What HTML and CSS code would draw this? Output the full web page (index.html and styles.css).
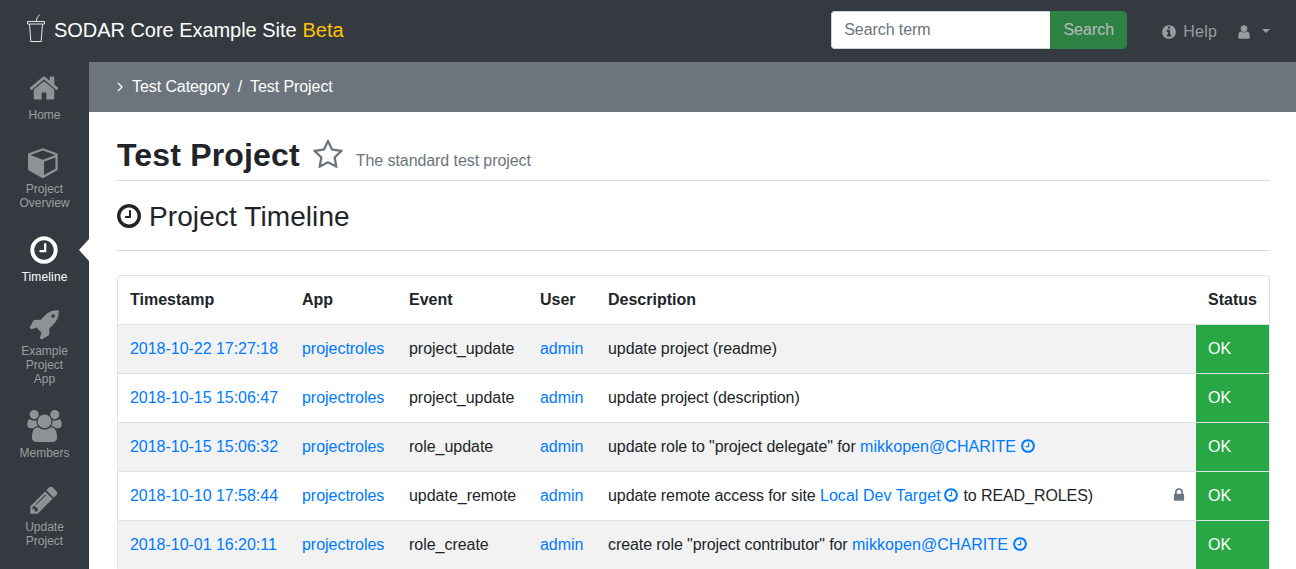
FILE: index.html

```html
<!DOCTYPE html>
<html lang="en">
<head>
  <meta charset="UTF-8" />
  <title>Project Timeline</title>
  <link rel="stylesheet" href="styles.css">
</head>
<body>

  <svg class="icon-defs" xmlns="http://www.w3.org/2000/svg">
    <symbol id="i-home" viewBox="0 0 1792 1792"><path d="M1472 992v480q0 26-19 45t-45 19h-384v-384h-256v384h-384q-26 0-45-19t-19-45v-480q0-1 .5-3t.5-3l575-474 575 474q1 2 1 6zm223-69l-62 74q-8 9-21 11h-3q-13 0-21-7l-692-577-692 577q-12 8-24 7-13-2-21-11l-62-74q-8-10-7-23.500t11-21.500l719-599q32-26 76-26t76 26l244 204v-195q0-14 9-23t23-9h192q14 0 23 9t9 23v408l219 182q10 8 11 21.500t-7 23.500z"/></symbol>
    <symbol id="i-cube" viewBox="0 0 1792 1792"><path d="M896 1629l640-349v-636l-640 233v752zm-64-865l698-254-698-254-698 254zm832-252v768q0 35-18 65t-49 47l-704 384q-28 16-61 16t-61-16l-704-384q-31-17-49-47t-18-65v-768q0-40 23-73t61-47l704-256q22-8 44-8t44 8l704 256q38 14 61 47t23 73z"/></symbol>
    <symbol id="i-clock" viewBox="0 0 1792 1792"><path d="M1024 544v448q0 14-9 23t-23 9h-320q-14 0-23-9t-9-23v-64q0-14 9-23t23-9h224v-352q0-14 9-23t23-9h64q14 0 23 9t9 23zm416 352q0-148-73-273t-198-198-273-73-273 73-198 198-73 273 73 273 198 198 273 73 273-73 198-198 73-273zm224 0q0 209-103 385.500t-279.500 279.500-385.500 103-385.500-103-279.500-279.500-103-385.500 103-385.500 279.500-279.500 385.500-103 385.500 103 279.500 279.500 103 385.500z"/></symbol>
    <symbol id="i-rocket" viewBox="0 0 1792 1792"><path d="M1504 448q0-40-28-68t-68-28-68 28-28 68 28 68 68 28 68-28 28-68zm224-288q0 249-75.500 430.500t-253.500 360.500q-81 80-195 176l-20 379q-2 16-16 26l-384 224q-7 4-16 4-12 0-23-9l-64-64q-13-14-8-32l85-276-281-281-276 85q-3 1-9 1-14 0-23-9l-64-64q-17-19-5-39l224-384q10-14 26-16l379-20q96-114 176-195 188-187 358-258t431-71q14 0 24 9.500t10 22.500z"/></symbol>
    <symbol id="i-users" viewBox="0 0 1920 1792"><path d="M593 896q-162 5-265 128h-134q-82 0-138-40.500t-56-118.500q0-353 124-353 6 0 43.500 21t97.500 42.500 119 21.500q67 0 133-23-5 37-5 66 0 139 81 256zm1071 637q0 120-73 189.500t-194 69.500h-874q-121 0-194-69.500t-73-189.500q0-53 3.500-103.500t14-109 26.500-108.500 43-97.500 62-81 85.500-53.500 111.500-20q10 0 43 21.500t73 48 107 48 135 21.500 135-21.500 107-48 73-48 43-21.500q61 0 111.500 20t85.500 53.500 62 81 43 97.500 26.500 108.500 14 109 3.500 103.500zm-1024-1277q0 106-75 181t-181 75-181-75-75-181 75-181 181-75 181 75 75 181zm704 384q0 159-112.500 271.500t-271.500 112.500-271.500-112.500-112.500-271.500 112.500-271.500 271.500-112.500 271.500 112.500 112.500 271.500zm576 225q0 78-56 118.500t-138 40.500h-134q-103-123-265-128 81-117 81-256 0-29-5-66 66 23 133 23 59 0 119-21.500t97.500-42.500 43.500-21q124 0 124 353zm-128-609q0 106-75 181t-181 75-181-75-75-181 75-181 181-75 181 75 75 181z"/></symbol>
    <symbol id="i-pencil" viewBox="0 0 1792 1792"><path d="M491 1536l91-91-235-235-91 91v107h128v128h107zm523-928q0-22-22-22-10 0-17 7l-542 542q-7 7-7 17 0 22 22 22 10 0 17-7l542-542q7-7 7-17zm-54-192l416 416-832 832h-416v-416zm683 96q0 53-37 90l-166 166-416-416 166-165q36-38 90-38 53 0 91 38l235 234q37 39 37 91z"/></symbol>
    <symbol id="i-star" viewBox="0 0 1792 1792"><path d="M1201 1004l306-297-422-62-189-382-189 382-422 62 306 297-73 421 378-199 377 199zm527-357q0 22-26 48l-363 354 86 500q1 7 1 20 0 50-41 50-19 0-40-12l-449-236-449 236q-22 12-40 12-21 0-31.500-14.500t-10.500-35.500q0-6 2-20l86-500-364-354q-25-27-25-48 0-37 56-46l502-73 225-455q19-41 49-41t49 41l225 455 502 73q56 9 56 46z"/></symbol>
    <symbol id="i-info" viewBox="0 0 1792 1792"><path d="M1152 1376v-160q0-14-9-23t-23-9h-96v-512q0-14-9-23t-23-9h-320q-14 0-23 9t-9 23v160q0 14 9 23t23 9h96v320h-96q-14 0-23 9t-9 23v160q0 14 9 23t23 9h448q14 0 23-9t9-23zm-128-896v-160q0-14-9-23t-23-9h-192q-14 0-23 9t-9 23v160q0 14 9 23t23 9h192q14 0 23-9t9-23zm640 416q0 209-103 385.500t-279.500 279.500-385.500 103-385.500-103-279.500-279.500-103-385.500 103-385.500 279.500-279.500 385.500-103 385.500 103 279.500 279.500 103 385.500z"/></symbol>
    <symbol id="i-user" viewBox="0 0 1792 1792"><path d="M1536 1399q0 109-62.500 187t-150.500 78h-854q-88 0-150.500-78t-62.500-187q0-85 8.500-160.500t31.500-152 58.500-131 94-89 134.500-34.500q131 128 313 128t313-128q76 0 134.500 34.500t94 89 58.500 131 31.500 152 8.500 160.500zm-256-887q0 159-112.500 271.500t-271.500 112.500-271.500-112.500-112.500-271.500 112.500-271.500 271.500-112.500 271.500 112.500 112.500 271.500z"/></symbol>
    <symbol id="i-lock" viewBox="0 0 1792 1792"><path d="M640 768h512v-192q0-106-75-181t-181-75-181 75-75 181v192zm832 96v576q0 40-28 68t-68 28h-960q-40 0-68-28t-28-68v-576q0-40 28-68t68-28h32v-192q0-184 132-316t316-132 316 132 132 316v192h32q40 0 68 28t28 68z"/></symbol>
  </svg>

  <nav class="topbar">
    <a class="brand" href="#">
      <svg class="brand-logo" viewBox="0 0 20 30" fill="none" stroke="#e6e6e6" stroke-width="1">
        <path d="M1.500 7.500h17v2.500h-17z"/>
        <path d="M3.500 10l1.300 17.500h10.400l1.300-17.500"/>
        <path d="M10 7.500l1.300-4 2.200-2.800"/>
      </svg>
      <span>SODAR Core Example Site</span>
      <span class="brand-tag">Beta</span>
    </a>
    <form class="search">
      <input type="text" placeholder="Search term" />
      <button type="button" disabled>Search</button>
    </form>
    <a class="top-link" href="#"><svg class="top-icon"><use href="#i-info"/></svg>Help</a>
    <a class="top-user" href="#"><svg class="top-icon"><use href="#i-user"/></svg><span class="caret"></span></a>
  </nav>

  <div class="page">
    <aside class="sidebar">
      <a class="side-item" href="#"><svg class="side-icon"><use href="#i-home"/></svg><span>Home</span></a>
      <a class="side-item" href="#"><svg class="side-icon"><use href="#i-cube"/></svg><span>Project<br>Overview</span></a>
      <a class="side-item active" href="#"><svg class="side-icon"><use href="#i-clock"/></svg><span>Timeline</span></a>
      <a class="side-item" href="#"><svg class="side-icon"><use href="#i-rocket"/></svg><span>Example<br>Project<br>App</span></a>
      <a class="side-item" href="#"><svg class="side-icon side-icon-wide"><use href="#i-users"/></svg><span>Members</span></a>
      <a class="side-item" href="#"><svg class="side-icon"><use href="#i-pencil"/></svg><span>Update<br>Project</span></a>
    </aside>

    <main class="main">
      <div class="crumbs">
        <svg class="crumb-arrow" viewBox="0 0 6 10" fill="none" stroke="#fff" stroke-width="1.300"><path d="M1 1l4 4-4 4"/></svg>
        <a href="#">Test Category</a>
        <span class="crumb-sep">/</span>
        <a href="#">Test Project</a>
      </div>

      <div class="content">
        <div class="project-head">
          <h2>Test Project</h2>
          <svg class="star"><use href="#i-star"/></svg>
          <span class="project-desc">The standard test project</span>
        </div>

        <div class="section-head">
          <svg class="section-icon"><use href="#i-clock"/></svg>
          <h3>Project Timeline</h3>
        </div>

        <div class="card">
          <table id="timeline">
            <colgroup>
              <col class="c-time"><col class="c-app"><col class="c-event"><col class="c-user"><col class="c-desc"><col>
            </colgroup>
            <thead>
              <tr>
                <th>Timestamp</th>
                <th>App</th>
                <th>Event</th>
                <th>User</th>
                <th>Description</th>
                <th>Status</th>
              </tr>
            </thead>
            <tbody>
              <tr>
                <td><a href="#">2018-10-22 17:27:18</a></td>
                <td><a href="#">projectroles</a></td>
                <td>project_update</td>
                <td><a href="#">admin</a></td>
                <td class="desc">update project (readme)</td>
                <td class="ok">OK</td>
              </tr>
              <tr>
                <td><a href="#">2018-10-15 15:06:47</a></td>
                <td><a href="#">projectroles</a></td>
                <td>project_update</td>
                <td><a href="#">admin</a></td>
                <td class="desc">update project (description)</td>
                <td class="ok">OK</td>
              </tr>
              <tr>
                <td><a href="#">2018-10-15 15:06:32</a></td>
                <td><a href="#">projectroles</a></td>
                <td>role_update</td>
                <td><a href="#">admin</a></td>
                <td class="desc">update role to "project delegate" for <a href="#">mikkopen@CHARITE</a> <svg class="mini-clock"><use href="#i-clock"/></svg></td>
                <td class="ok">OK</td>
              </tr>
              <tr>
                <td><a href="#">2018-10-10 17:58:44</a></td>
                <td><a href="#">projectroles</a></td>
                <td>update_remote</td>
                <td><a href="#">admin</a></td>
                <td class="desc"><svg class="lock"><use href="#i-lock"/></svg>update remote access for site <a href="#">Local Dev Target</a> <svg class="mini-clock tight"><use href="#i-clock"/></svg> to READ_ROLES)</td>
                <td class="ok">OK</td>
              </tr>
              <tr>
                <td><a href="#">2018-10-01 16:20:11</a></td>
                <td><a href="#">projectroles</a></td>
                <td>role_create</td>
                <td><a href="#">admin</a></td>
                <td class="desc">create role "project contributor" for <a href="#">mikkopen@CHARITE</a> <svg class="mini-clock"><use href="#i-clock"/></svg></td>
                <td class="ok">OK</td>
              </tr>
            </tbody>
          </table>
        </div>
      </div>
    </main>
  </div>

</body>
</html>
```

FILE: styles.css

```css
html, body {
  height: 100%;
}
body {
  font-family: "Liberation Sans", Arial, sans-serif;
  font-size: 16px;
  line-height: 24px;
  color: #212529;
  background: #fff;
  margin: 0;
  overflow: hidden;
}
a {
  color: #007bff;
  text-decoration: none;
}
.icon-defs {
  display: none;
}

/* top bar */
.topbar {
  display: flex;
  align-items: center;
  height: 62px;
  background-color: #343a40;
  padding: 0 26px 2px;
  box-sizing: border-box;
}
.brand {
  display: flex;
  align-items: center;
  color: #fff;
  font-size: 20px;
  letter-spacing: -.04px;
}
.brand-logo {
  width: 20px;
  height: 30px;
  margin-right: 8px;
  margin-top: -3px;
}
.brand-tag {
  color: #ffc107;
  margin-left: 6px;
}
.search {
  display: flex;
  margin-left: auto;
  margin-right: 35px;
}
.search input {
  width: 219px;
  height: 38px;
  box-sizing: border-box;
  padding: 6px 12px;
  font-family: inherit;
  font-size: 16px;
  letter-spacing: -.08px;
  border: 1px solid #ced4da;
  border-right: 0;
  border-radius: 4px 0 0 4px;
  outline: none;
}
.search input::placeholder {
  color: #6c757d;
}
.search button {
  width: 77px;
  height: 38px;
  font-family: inherit;
  font-size: 16px;
  color: #fff;
  background-color: #28a745;
  border: 1px solid #28a745;
  border-radius: 0 4px 4px 0;
  opacity: .65;
}
.top-link, .top-user {
  display: flex;
  align-items: center;
  color: rgba(255, 255, 255, .5);
  fill: rgba(255, 255, 255, .5);
  margin-top: 4px;
}
.top-link {
  margin-left: -1px;
  letter-spacing: .2px;
}
.top-icon {
  width: 16px;
  height: 16px;
  margin-right: 6px;
}
.top-user {
  margin-left: 19px;
}
.caret {
  width: 0;
  height: 0;
  margin-left: 4px;
  margin-top: -3px;
  border-top: 4px solid rgba(255, 255, 255, .5);
  border-left: 4px solid transparent;
  border-right: 4px solid transparent;
}

/* page columns */
.page {
  display: flex;
  height: calc(100vh - 62px);
}
.sidebar {
  position: relative;
  width: 89px;
  flex-shrink: 0;
  background-color: #343a40;
}
.side-item {
  position: relative;
  display: flex;
  flex-direction: column;
  align-items: center;
  padding: 10px 0 14px;
  font-size: 12px;
  line-height: 14px;
  text-align: center;
  color: rgba(255, 255, 255, .5);
  fill: #8f9295;
}
.side-icon {
  width: 32px;
  height: 32px;
  margin-bottom: 4px;
  margin-left: -1px;
}
.side-icon-wide {
  width: 35px;
}
.side-item.active {
  color: #fff;
  fill: #fff;
  letter-spacing: .15px;
}
.side-item.active::after {
  content: "";
  position: absolute;
  right: 0;
  top: 15px;
  border-top: 11px solid transparent;
  border-bottom: 11px solid transparent;
  border-right: 10px solid #fff;
}

/* main column */
.main {
  flex: 1;
  min-width: 0;
}
.crumbs {
  display: flex;
  align-items: center;
  height: 50px;
  padding-left: 28px;
  background-color: #6c757d;
  color: #fff;
  letter-spacing: -.08px;
}
.crumbs a {
  color: #fff;
}
.crumb-arrow {
  width: 6px;
  height: 10px;
  margin-right: 9px;
}
.crumb-sep {
  margin: 0 8px;
}
.content {
  padding: 0 26px 0 28px;
}
.project-head {
  display: flex;
  align-items: center;
  height: 50px;
  padding-top: 18px;
  border-bottom: 1px solid #dcdcdc;
}
.project-head h2 {
  margin: 0 12px 0 0;
  font-size: 32px;
  line-height: 38px;
  font-weight: bold;
  letter-spacing: .17px;
}
.star {
  width: 32px;
  height: 32px;
  fill: #6c757d;
  margin-right: 12px;
}
.project-desc {
  color: #6c757d;
  margin-top: 11px;
  letter-spacing: -.08px;
}
.section-head {
  display: flex;
  align-items: center;
  height: 69px;
  border-bottom: 1px solid #dcdcdc;
}
.section-head h3 {
  margin: 3px 0 0;
  font-size: 28px;
  line-height: 34px;
  font-weight: normal;
  letter-spacing: .1px;
}
.section-icon {
  width: 28px;
  height: 28px;
  fill: #212529;
  margin-left: -2px;
  margin-right: 6px;
}

/* table */
.card {
  margin-top: 24px;
  border: 1px solid #dee2e6;
  border-radius: 4px;
}
table {
  width: 100%;
  table-layout: fixed;
  border-collapse: collapse;
}
.c-time { width: 172px; }
.c-app { width: 107px; }
.c-event { width: 131px; }
.c-user { width: 68px; }
.c-desc { width: 600px; }
th, td {
  height: 48px;
  padding: 12px;
  box-sizing: border-box;
  text-align: left;
  white-space: nowrap;
  border-bottom: 1px solid #dee2e6;
}
th {
  font-weight: bold;
}
td {
  letter-spacing: -.03px;
}
td.desc {
  letter-spacing: -.08px;
}
td.desc a {
  letter-spacing: .06px;
}
tbody tr:nth-child(odd) {
  background-color: #f2f2f2;
}
td.ok {
  background-color: #28a745;
  color: #fff;
}
.mini-clock {
  width: 16px;
  height: 16px;
  fill: #007bff;
  vertical-align: -2px;
}
.mini-clock.tight {
  margin-left: -2px;
}
.lock {
  float: right;
  width: 16px;
  height: 16px;
  fill: #6c757d;
  margin-top: 3px;
  margin-right: -3px;
}
```
